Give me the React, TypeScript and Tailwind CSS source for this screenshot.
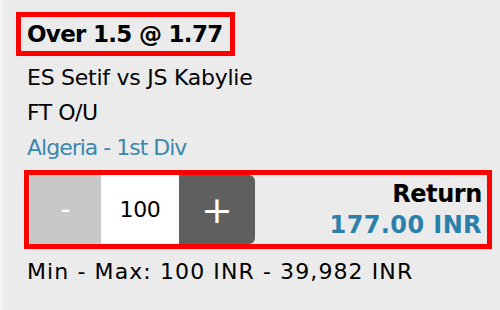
export default function App() {
  return (
    <div
      className="h-[310px] w-[500px] overflow-hidden bg-[#ebebeb] border-l-[3px] border-[#f3f3f3] text-black"
      style={{ fontFamily: "Tahoma, 'DejaVu Sans', sans-serif" }}
    >
      <div className="pt-[12px] pl-[13px]">
        {/* selection title */}
        <div className="inline-flex h-[44px] items-center border-[5px] border-[#ff0000] pl-[6px] pr-[7px]">
          <span className="text-[23px] font-bold leading-none tracking-[-0.7px]">Over 1.5 @ 1.77</span>
        </div>

        <div className="pl-[11px] text-[22px] leading-[35px] tracking-[-0.25px]">
          <div className="mt-[4px]">ES Setif vs JS Kabylie</div>
          <div className="tracking-[-0.5px]">FT O/U</div>
          <div className="tracking-[-1px] text-[#3a87ad]">Algeria - 1st Div</div>
        </div>

        {/* stake row */}
        <div className="ml-[8px] mt-[5px] flex h-[79px] w-[468px] items-stretch border-[5px] border-[#ff0000] pl-px">
          <button className="flex w-[71px] items-center justify-center bg-[#c8c8c8] text-[28px] text-white">-</button>
          <div className="flex w-[78px] items-center justify-center bg-white text-[22px] tracking-[-0.4px]">100</div>
          <button className="flex w-[76px] items-center justify-center rounded-r-[6px] bg-[#5f5f5f] text-[38px] leading-none text-white">+</button>
          <div className="flex flex-1 flex-col items-end justify-center pr-[5px] font-bold text-[24px] leading-[31px]">
            <div className="tracking-[-0.4px]">Return</div>
            <div className="tracking-[0.4px] text-[#2a7fab]">177.00 INR</div>
          </div>
        </div>

        <div className="pl-[11px] mt-[11px] text-[22px] leading-[24px] tracking-[1.1px]">
          Min - Max: 100 INR - 39,982 INR
        </div>
      </div>
    </div>
  );
}
